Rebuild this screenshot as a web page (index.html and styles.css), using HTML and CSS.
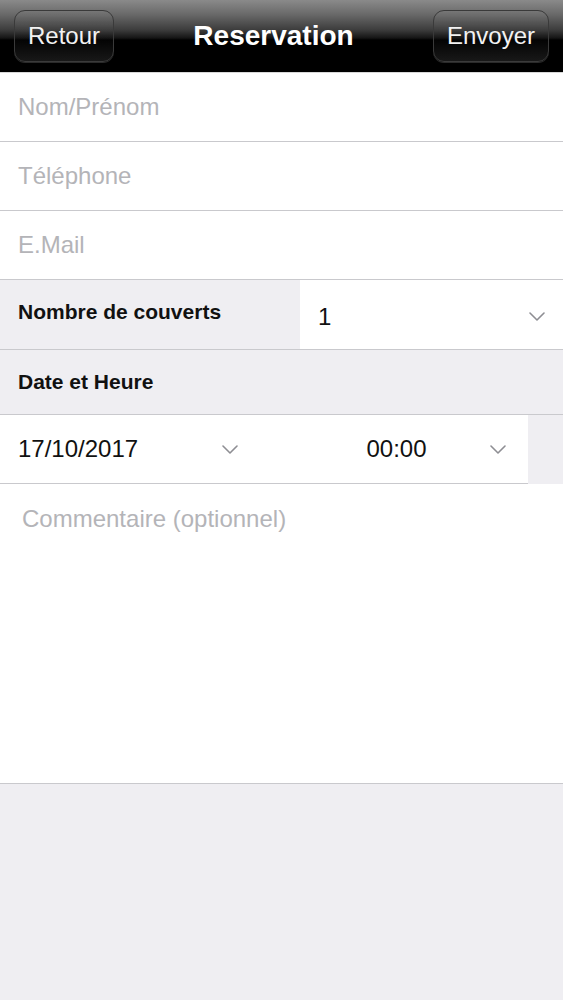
FILE: index.html
```html
<!DOCTYPE html>
<html lang="fr">
<head>
<meta charset="utf-8">
<title>Reservation</title>
<link rel="stylesheet" href="styles.css">
</head>
<body>
<div class="app">
  <header class="navbar">
    <button class="nav-btn">Retour</button>
    <h1 class="nav-title">Reservation</h1>
    <button class="nav-btn">Envoyer</button>
  </header>

  <div class="field"><span class="placeholder">Nom/Prénom</span></div>
  <div class="field"><span class="placeholder">Téléphone</span></div>
  <div class="field"><span class="placeholder">E.Mail</span></div>

  <div class="row covers">
    <div class="row-label">Nombre de couverts</div>
    <div class="select">
      <span class="value">1</span>
      <svg class="chevron" viewBox="0 0 16 9" width="16" height="9"><path d="M1 1 L8 8 L15 1"/></svg>
    </div>
  </div>

  <div class="section-head">Date et Heure</div>

  <div class="datetime">
    <div class="dt-cells">
      <div class="select date">
        <span class="value">17/10/2017</span>
        <svg class="chevron" viewBox="0 0 16 9" width="16" height="9"><path d="M1 1 L8 8 L15 1"/></svg>
      </div>
      <div class="select time">
        <span class="value">00:00</span>
        <svg class="chevron" viewBox="0 0 16 9" width="16" height="9"><path d="M1 1 L8 8 L15 1"/></svg>
      </div>
    </div>
    <div class="dt-side"></div>
  </div>

  <div class="comment"><span class="placeholder">Commentaire (optionnel)</span></div>

  <div class="footer-space"></div>
</div>
</body>
</html>
```

FILE: styles.css
```css
html, body {
  margin: 0;
  padding: 0;
  background: #efeef2;
  font-family: "Liberation Sans", Arial, sans-serif;
}

.app {
  display: flex;
  flex-direction: column;
  min-height: 1000px;
}

.navbar {
  height: 73px;
  display: flex;
  align-items: center;
  padding: 0 14px;
  box-sizing: border-box;
  background: linear-gradient(to bottom, #8a8a8a 0px, #6a6a6a 14px, #3c3c3c 30px, #151515 38px, #000 40px, #000 100%);
  border-bottom: 1px solid #d8d8d8;
}

.nav-btn {
  height: 52px;
  padding: 0 13px;
  border: 1.5px solid #3a3a3a;
  border-radius: 11px;
  background: linear-gradient(to bottom, rgba(255,255,255,0.04) 0%, rgba(0,0,0,0) 50%, rgba(40,40,40,0.6) 100%);
  box-shadow: 0 1px 0 rgba(120,120,120,0.35);
  color: #f2f2f2;
  font-family: "Liberation Sans", Arial, sans-serif;
  font-size: 24px;
  line-height: 1;
  cursor: pointer;
}

.nav-title {
  flex: 1;
  margin: 0;
  text-align: center;
  color: #fff;
  font-size: 28px;
  font-weight: bold;
}

.field {
  height: 68px;
  display: flex;
  align-items: center;
  padding: 0 18px;
  background: #fff;
  border-bottom: 1px solid #c9c9cd;
}

.placeholder {
  color: #b4b4b8;
  font-size: 24px;
}

.row {
  display: flex;
  height: 69px;
  border-bottom: 1px solid #c9c9cd;
}

.row-label {
  width: 300px;
  box-sizing: border-box;
  padding: 0 18px 6px;
  display: flex;
  align-items: center;
  font-size: 21px;
  font-weight: bold;
  color: #111;
  background: #efeef2;
}

.select {
  flex: 1;
  display: flex;
  align-items: center;
  justify-content: space-between;
  background: #fff;
  padding: 4px 18px 0;
}

.value {
  font-size: 24px;
  color: #111;
}

.chevron {
  fill: none;
  stroke: #8e8e93;
  stroke-width: 1.6;
  stroke-linecap: round;
  stroke-linejoin: round;
}

.section-head {
  height: 64px;
  display: flex;
  align-items: center;
  padding: 0 18px;
  font-size: 21px;
  font-weight: bold;
  color: #111;
  background: #efeef2;
  border-bottom: 1px solid #c9c9cd;
}

.datetime {
  display: flex;
  height: 69px;
}

.dt-cells {
  width: 528px;
  display: grid;
  grid-template-columns: 1fr 1fr;
  column-gap: 9px;
  background: #fff;
  border-bottom: 1px solid #c9c9cd;
}

.dt-side {
  flex: 1;
  background: #efeef2;
}

.select.date {
  padding: 0 22px 0 18px;
}

.select.time {
  position: relative;
  justify-content: flex-start;
  padding: 0 22px 0 98px;
}

.select.time .chevron {
  position: absolute;
  right: 22px;
  top: 30px;
}

.comment {
  height: 300px;
  box-sizing: border-box;
  padding: 21px 22px 0;
  background: #fff;
  border-bottom: 1px solid #c9c9cd;
  line-height: 28px;
}

.footer-space {
  flex: 1;
  background: #efeef2;
}
```
